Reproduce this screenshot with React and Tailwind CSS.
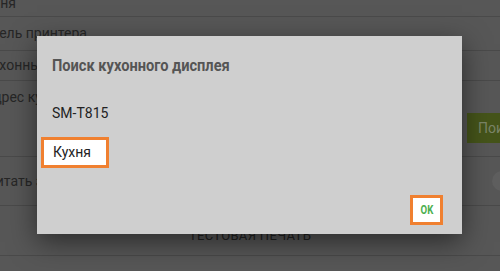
import React from 'react'

const font = { fontFamily: 'Roboto, "Noto Sans", sans-serif' }

export default function App() {
  const styles = {
    row: `flex items-center border-b border-[#4a4a4a] text-[14px] text-[#262626] whitespace-nowrap`,
  }

  return (
    <div className="relative w-[500px] h-[271px] overflow-hidden bg-[#575757]" style={font}>
      {/* page behind the overlay */}
      <div className="-mt-[10px]">
        <div className={`${styles.row} h-[27px] -ml-[22px]`}>Кухня</div>
        <div className={`${styles.row} h-[34px] -ml-[29px]`}>Модель принтера</div>
        <div className={`${styles.row} h-[30px] -ml-[16px]`}>Кухонный дисплей</div>
        <div className="flex flex-col h-[76px] border-b border-[#4a4a4a]">
          <div className="h-[32px] flex items-center text-[14px] text-[#262626] -ml-[16px] whitespace-nowrap">Адрес кухонного дисплея</div>
          <div className="flex justify-end">
            <div className="w-[33px] h-[30px] bg-[#45541a] flex items-center pl-[11px] text-[14px] text-[#7b8568] overflow-hidden whitespace-nowrap">
              Поиск
            </div>
          </div>
        </div>
        <div className={`${styles.row} h-[49px] justify-between`}>
          <span className="-ml-[21px]">Считать заказ</span>
          <span className="w-[20px] h-[20px] rounded-full bg-[#5f5f5f] -mr-[12px]" />
        </div>
        <div className="h-[50px] border-b border-[#4a4a4a] flex items-end justify-center pb-[10px] text-[13px] text-[#222] tracking-wide">
          ТЕСТОВАЯ ПЕЧАТЬ
        </div>
      </div>

      {/* dialog */}
      <div className="absolute left-[37px] top-[36px] w-[425px] h-[198px] bg-[#cfcfcf] shadow-[0_8px_26px_rgba(0,0,0,0.5)] flex flex-col">
        <div className="pl-[15px] pt-[18px] text-[17px] font-bold text-[#555] leading-[22px] whitespace-nowrap">
          <span className="inline-block origin-left scale-x-[0.86]">Поиск кухонного дисплея</span>
        </div>
        <div className="pl-[15px] pt-[28px] text-[14px] text-[#222] leading-[18px]">SM-T815</div>
        <div className="pl-[4px] pt-[15px]">
          <div className="w-[68px] h-[31px] border-[3px] border-[#f08030] bg-white flex items-center pl-[9px] text-[14px] text-[#222]">
            Кухня
          </div>
        </div>
        <div className="flex-1" />
        <div className="flex justify-end pr-[19px] pb-[9px]">
          <div className="w-[33px] h-[30px] border-[3px] border-[#f08030] bg-white flex items-center justify-center text-[12px] font-bold text-[#4caf50]">
            <span className="scale-x-[0.8]">OK</span>
          </div>
        </div>
      </div>
    </div>
  )
}
